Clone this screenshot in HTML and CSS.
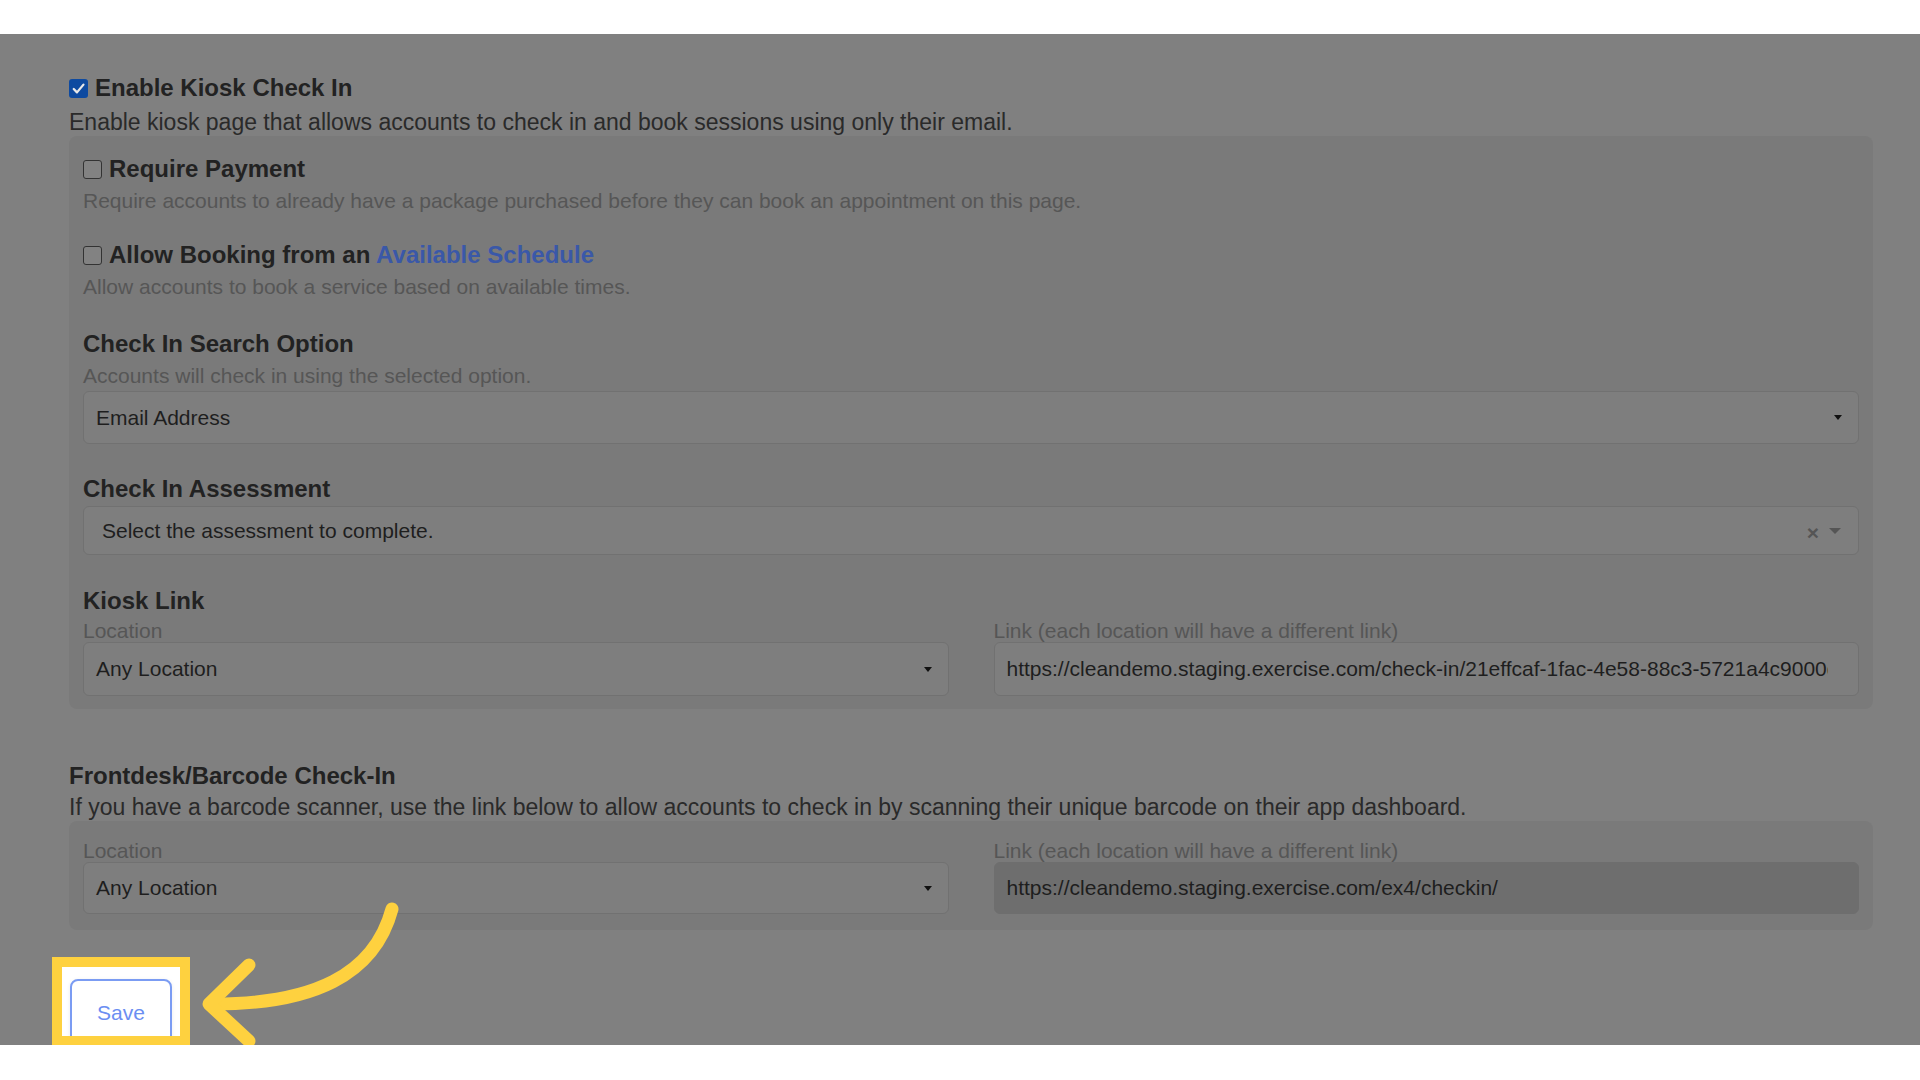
FILE: index.html
```html
<!DOCTYPE html>
<html lang="en">
<head>
    <meta charset="UTF-8">
    <meta name="viewport" content="width=device-width, initial-scale=1.0">
    <title>Check In Settings</title>
    <link rel="stylesheet" href="styles.css">
</head>
<body>
    <div class="top-band"></div>

    <div class="stage">
        <form class="settings">
            <!-- Kiosk -->
            <label class="check-row">
                <span class="box checked"><svg viewBox="0 0 20 20"><path d="M5 10.5l3.4 3.6 6.8-8.2"/></svg></span>
                <span class="title">Enable Kiosk Check In</span>
            </label>
            <p class="desc">Enable kiosk page that allows accounts to check in and book sessions using only their email.</p>

            <div class="panel kiosk-panel">
                <div class="option">
                    <label class="check-row">
                        <span class="box"></span>
                        <span class="title">Require Payment</span>
                    </label>
                    <p class="hint">Require accounts to already have a package purchased before they can book an appointment on this page.</p>
                </div>

                <div class="option">
                    <label class="check-row">
                        <span class="box"></span>
                        <span class="title">Allow Booking from an <a href="#" class="link">Available Schedule</a></span>
                    </label>
                    <p class="hint">Allow accounts to book a service based on available times.</p>
                </div>

                <div class="field">
                    <h3 class="title">Check In Search Option</h3>
                    <p class="hint">Accounts will check in using the selected option.</p>
                    <div class="select search-select">
                        <span>Email Address</span>
                        <span class="caret"></span>
                    </div>
                </div>

                <div class="field assessment">
                    <h3 class="title">Check In Assessment</h3>
                    <div class="select select2">
                        <span>Select the assessment to complete.</span>
                        <span class="select2-icons"><span class="clear">×</span><span class="caret light"></span></span>
                    </div>
                </div>

                <div class="field kiosk-link">
                    <h3 class="title">Kiosk Link</h3>
                    <div class="link-grid">
                        <div>
                            <div class="label">Location</div>
                            <div class="select loc-select">
                                <span>Any Location</span>
                                <span class="caret"></span>
                            </div>
                        </div>
                        <div>
                            <div class="label">Link (each location will have a different link)</div>
                            <input class="link-input" type="text" readonly value="https://cleandemo.staging.exercise.com/check-in/21effcaf-1fac-4e58-88c3-5721a4c9000d8e2">
                        </div>
                    </div>
                </div>
            </div>

            <!-- Frontdesk -->
            <h3 class="title section-title">Frontdesk/Barcode Check-In</h3>
            <p class="desc">If you have a barcode scanner, use the link below to allow accounts to check in by scanning their unique barcode on their app dashboard.</p>

            <div class="panel barcode-panel">
                <div class="link-grid">
                    <div>
                        <div class="label">Location</div>
                        <div class="select loc-select short">
                            <span>Any Location</span>
                            <span class="caret"></span>
                        </div>
                    </div>
                    <div>
                        <div class="label">Link (each location will have a different link)</div>
                        <input class="link-input short disabled" type="text" readonly value="https://cleandemo.staging.exercise.com/ex4/checkin/">
                    </div>
                </div>
            </div>

            <div class="spotlight">
                <button type="button" class="save-btn">Save</button>
            </div>
        </form>

        <!-- стрелка-подсказка -->
        <svg class="pointer" viewBox="0 0 1920 1011">
            <path d="M392 875 C374 942 312 970 214 970"/>
            <path d="M249 931 L209 970 L249 1007"/>
        </svg>
    </div>

    <div class="bottom-band"></div>
</body>
</html>
```

FILE: styles.css
```css
body {
    margin: 0;
    font-family: 'Liberation Sans', Arial, sans-serif;
    background: #fff;
    overflow: hidden;
}

.top-band {
    height: 34px;
    background: #fff;
}

.bottom-band {
    height: 35px;
    background: #fff;
}

/* затемнённая область */
.stage {
    position: relative;
    height: 1011px;
    background: #808080;
    overflow: hidden;
}

.settings {
    padding: 38px 47px 0 69px;
}

p {
    margin: 0;
}

/* Заголовки и чекбоксы */
.title {
    margin: 0;
    font-size: 24px;
    font-weight: bold;
    line-height: 32px;
    color: #222;
}

h3.title {
    line-height: 27px;
    padding-top: 5px;
}

.check-row {
    display: flex;
    align-items: center;
    gap: 7px;
    height: 32px;
}

.box {
    width: 17px;
    height: 17px;
    border: 1px solid #333;
    border-radius: 3px;
    background: #828282;
    flex-shrink: 0;
}

.box.checked {
    width: 19px;
    height: 19px;
    border: none;
    background: #0e4aa0;
}

.box svg {
    display: block;
    width: 19px;
    height: 19px;
    fill: none;
    stroke: #e8e8e8;
    stroke-width: 2.4;
    stroke-linecap: round;
    stroke-linejoin: round;
}

.link {
    color: #3a58a8;
    text-decoration: none;
}

.desc {
    font-size: 23px;
    line-height: 28px;
    padding-top: 4px;
    color: #2a2a2a;
}

.hint {
    font-size: 21px;
    line-height: 27px;
    padding-top: 5px;
    color: #565656;
}

.option .hint {
    line-height: 32px;
    padding-top: 0;
}

/* Панели */
.panel {
    background: #7a7a7a;
    border-radius: 8px;
    padding: 17px 14px 13px;
}

.option {
    margin-bottom: 22px;
}

.field.assessment {
    margin-top: 26px;
}

.field.kiosk-link {
    margin-top: 27px;
}

/* Селекты */
.select {
    display: flex;
    align-items: center;
    justify-content: space-between;
    box-sizing: border-box;
    height: 54px;
    padding: 0 16px 0 12px;
    background: #7e7e7e;
    border: 1px solid #717171;
    border-radius: 6px;
    font-size: 21px;
    color: #1e1e1e;
}

.search-select {
    margin-top: 2px;
    height: 53px;
}

.select2 {
    margin-top: 4px;
    height: 49px;
    padding-left: 18px;
    padding-right: 17px;
}

.select2-icons {
    display: flex;
    align-items: center;
    gap: 10px;
}

.clear {
    font-size: 21px;
    font-weight: bold;
    color: #555;
    line-height: 1;
    margin-top: 3px;
}

.caret {
    width: 0;
    height: 0;
    border-left: 4px solid transparent;
    border-right: 4px solid transparent;
    border-top: 5px solid #111;
}

.caret.light {
    border-left-width: 6px;
    border-right-width: 6px;
    border-top: 6px solid #555;
}

.link-grid {
    display: grid;
    grid-template-columns: 1fr 1fr;
    gap: 45px;
}

.label {
    font-size: 21px;
    line-height: 23px;
    padding-top: 5px;
    color: #565656;
}

.link-input {
    display: block;
    width: 100%;
    box-sizing: border-box;
    height: 54px;
    padding: 0 30px 0 12px;
    background: #7e7e7e;
    border: 1px solid #717171;
    border-radius: 6px;
    font-family: inherit;
    font-size: 21px;
    color: #1e1e1e;
    outline: none;
}

.select.short,
.link-input.short {
    height: 52px;
}

.link-input.disabled {
    background: #6e6e6e;
    border-color: #6e6e6e;
}

/* Frontdesk */
.section-title {
    margin-top: 48px;
}

.barcode-panel {
    padding: 13px 14px 16px;
}

/* Подсвеченная кнопка */
.spotlight {
    box-sizing: border-box;
    width: 138px;
    height: 89px;
    margin: 27px 0 0 -17px;
    padding: 12px 8px 0;
    border: 10px solid #fed13f;
    background: #fff;
    overflow: hidden;
}

.save-btn {
    display: flex;
    align-items: center;
    justify-content: center;
    width: 102px;
    height: 68px;
    padding: 0;
    background: #fff;
    border: 2px solid #7b9cf3;
    border-radius: 8px;
    box-shadow: 0 1px 4px rgba(0, 0, 0, 0.08);
    font-family: inherit;
    font-size: 21px;
    color: #6b8ef2;
}

/* стрелка */
.pointer {
    position: absolute;
    top: 0;
    left: 0;
    width: 1920px;
    height: 1011px;
    pointer-events: none;
    fill: none;
    stroke: #fed13f;
    stroke-width: 13;
    stroke-linecap: round;
    stroke-linejoin: round;
}
```
